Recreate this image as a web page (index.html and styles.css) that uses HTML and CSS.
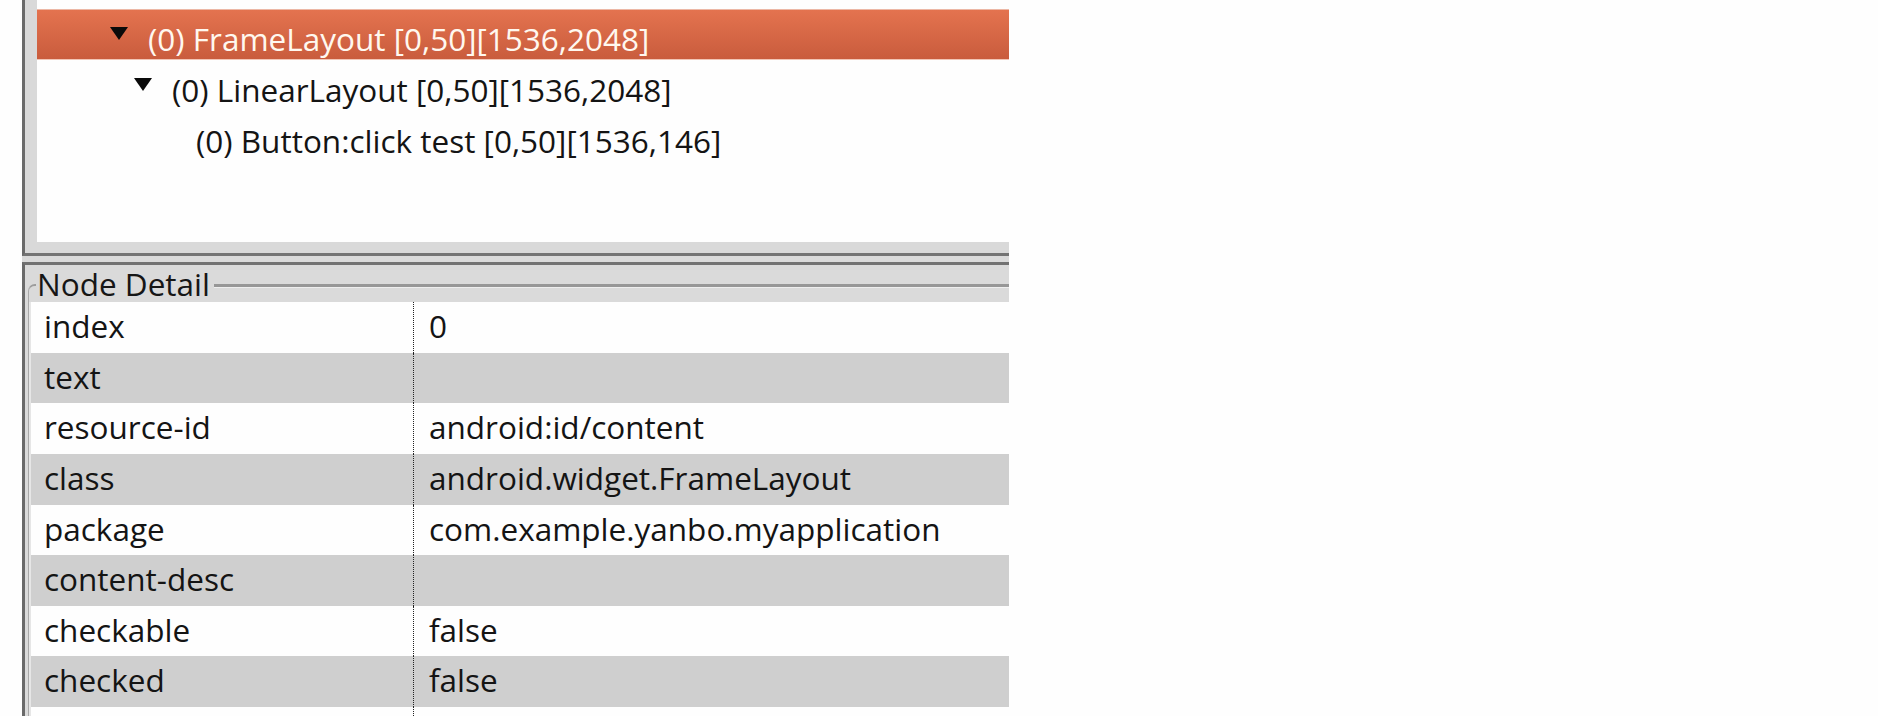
FILE: index.html
```html
<!DOCTYPE html>
<html lang="en">
<head>
<meta charset="utf-8">
<title>UI Automator Viewer - Node Detail</title>
<link rel="stylesheet" href="styles.css">
</head>
<body>
<div class="app">
  <section class="tree-pane">
    <div class="tree">
      <div class="node lvl1 selected">
        <svg class="twisty" viewBox="0 0 18 13" aria-hidden="true"><polygon points="0,0 18,0 9,13"/></svg>
        <span class="label">(0) FrameLayout [0,50][1536,2048]</span>
      </div>
      <div class="node lvl2">
        <svg class="twisty" viewBox="0 0 18 13" aria-hidden="true"><polygon points="0,0 18,0 9,13"/></svg>
        <span class="label">(0) LinearLayout [0,50][1536,2048]</span>
      </div>
      <div class="node lvl3">
        <span class="leaf"></span>
        <span class="label">(0) Button:click test [0,50][1536,146]</span>
      </div>
    </div>
  </section>
  <div class="splitter"></div>
  <section class="detail">
    <div class="gb-head">
      <span class="gb-corner"></span>
      <span class="gb-title">Node Detail</span>
      <span class="gb-rule"></span>
    </div>
    <div class="gb-body">
      <div class="props">
        <div class="prop"><span class="key">index</span><span class="val">0</span></div>
        <div class="prop"><span class="key">text</span><span class="val"></span></div>
        <div class="prop"><span class="key">resource-id</span><span class="val">android:id/content</span></div>
        <div class="prop"><span class="key">class</span><span class="val">android.widget.FrameLayout</span></div>
        <div class="prop"><span class="key">package</span><span class="val">com.example.yanbo.myapplication</span></div>
        <div class="prop"><span class="key">content-desc</span><span class="val"></span></div>
        <div class="prop"><span class="key">checkable</span><span class="val">false</span></div>
        <div class="prop"><span class="key">checked</span><span class="val">false</span></div>
        <div class="prop"><span class="key"></span><span class="val"></span></div>
      </div>
    </div>
  </section>
</div>
</body>
</html>
```

FILE: styles.css
```css
html, body {
  margin: 0;
  padding: 0;
  background: #fefefe;
  overflow: hidden;
  height: 716px;
}

body {
  font-family: "Open Sans", "Noto Sans", sans-serif;
  font-size: 31.5px;
  font-weight: 500;
  color: #141414;
}

.app {
  width: 987px;
  margin-left: 22px;
  display: flex;
  flex-direction: column;
}

/* ---------- hierarchy tree ---------- */
.tree-pane {
  border-left: 3px solid #6a6a6a;
  border-bottom: 3px solid #747474;
  background: #d9d9d9;
  padding: 0 0 11px 12px;
}

.tree {
  background: #fefefe;
  height: 242px;
  box-sizing: border-box;
  padding-top: 9px;
}

.node {
  display: flex;
  align-items: center;
  height: 51px;
  box-sizing: border-box;
  border-top: 1px solid transparent;
  border-bottom: 1px solid transparent;
  white-space: nowrap;
}

.node.selected {
  background: linear-gradient(#e4734f, #c95c3d);
  border-top-color: #ecb7a5;
  border-bottom-color: #f2c6b6;
  color: #fff8ef;
}

.lvl1 { padding-left: 73px; }
.lvl2 { padding-left: 97px; }
.lvl3 { padding-left: 121px; }

.twisty {
  width: 18px;
  height: 13px;
  margin-top: -2px;
  margin-right: 20px;
  fill: #0a0a0a;
  flex: none;
}

.leaf {
  width: 38px;
  flex: none;
}

.label {
  line-height: 41px;
  padding-top: 8px;
}

.splitter {
  height: 6px;
  background: #dadada;
}

/* ---------- node detail ---------- */
.detail {
  border-top: 3px solid #727272;
  border-left: 3px solid #6a6a6a;
  background: #dadada;
}

.gb-head {
  display: flex;
  align-items: flex-start;
  height: 37px;
}

.gb-corner {
  width: 8px;
  height: 18px;
  margin-left: 3px;
  margin-top: 19px;
  box-sizing: border-box;
  border-top: 2px solid #9c9c9c;
  border-left: 1px solid #a8a8a8;
  border-top-left-radius: 7px;
  flex: none;
}

.gb-title {
  line-height: 37px;
  margin-left: 1px;
  color: #161616;
  flex: none;
}

.gb-rule {
  flex: 1;
  margin-top: 19px;
  margin-left: 4px;
  border-top: 3px solid #979797;
  border-bottom: 1px solid #eeeeee;
}

.gb-body {
  margin-left: 3px;
  border-left: 1px solid #a8a8a8;
  padding-left: 2px;
  background: #e6e6e6;
}

.prop {
  display: grid;
  grid-template-columns: 383px 1fr;
  height: 50.625px;
  background: #fefefe;
  white-space: nowrap;
}

.prop:nth-child(even) {
  background: #cfcfcf;
}

.key {
  padding-left: 13px;
  border-right: 1px dotted #222;
  line-height: 48.6px;
}

.val {
  padding-left: 15px;
  line-height: 48.6px;
}
```
